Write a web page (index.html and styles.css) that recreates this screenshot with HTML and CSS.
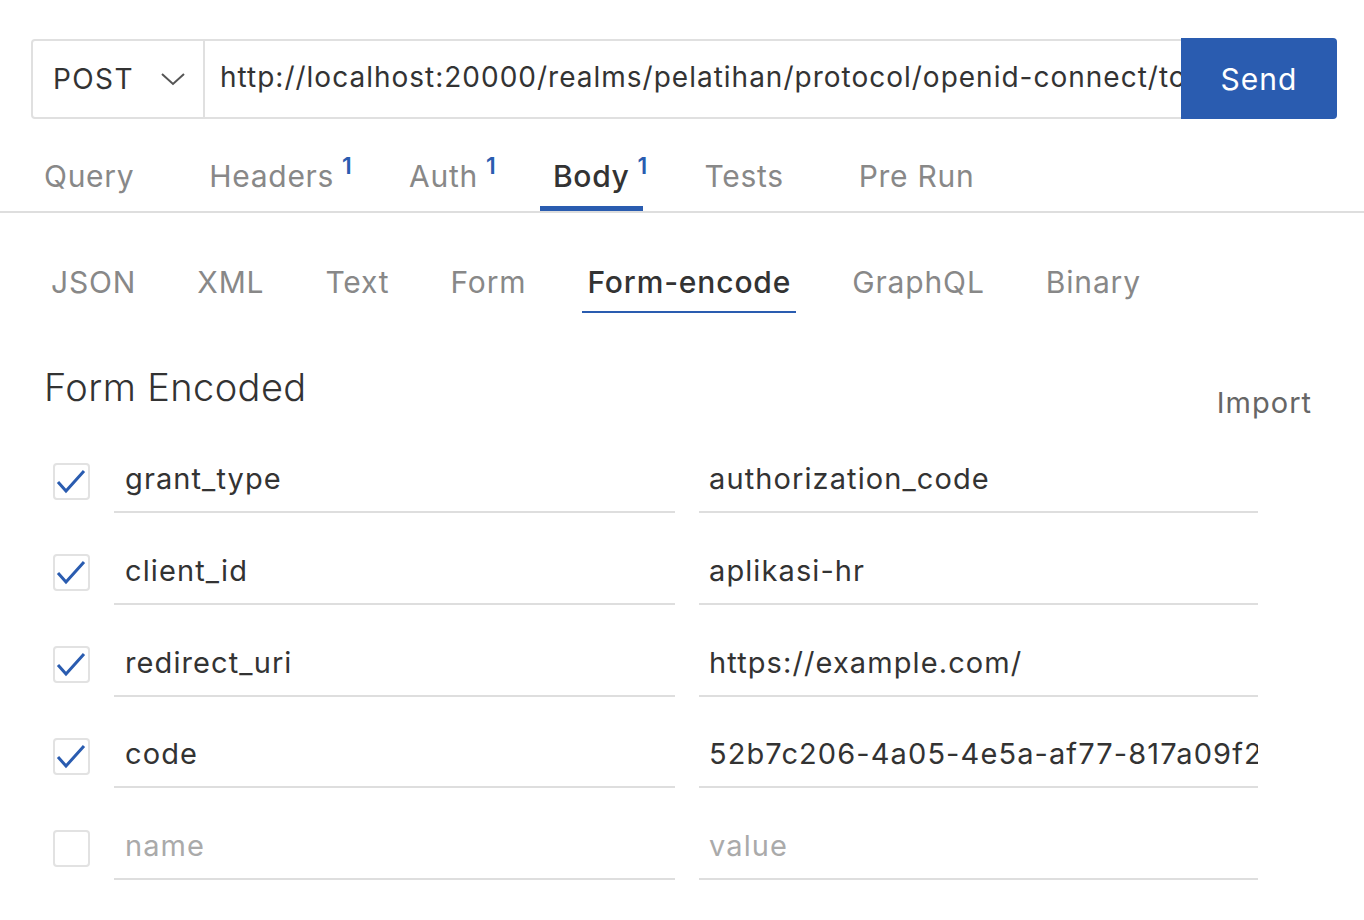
FILE: index.html
```html
<!DOCTYPE html>
<html>
<head>
<meta charset="utf-8">
<link rel="stylesheet" href="styles.css">
</head>
<body>
<div class="urlbar">
  <div class="method">
    <span>POST</span>
    <svg class="chev" width="26" height="14" viewBox="0 0 26 14"><path d="M2 2 L13 12 L24 2" fill="none" stroke="#555" stroke-width="2"/></svg>
  </div>
  <div class="url">http://localhost:20000/realms/pelatihan/protocol/openid-connect/token</div>
  <button class="send">Send</button>
</div>

<nav class="tabs">
  <div class="tab">Query</div>
  <div class="tab"><span class="lbl">Headers<span class="badge">1</span></span></div>
  <div class="tab"><span class="lbl">Auth<span class="badge">1</span></span></div>
  <div class="tab active"><span class="lbl">Body<span class="badge">1</span></span></div>
  <div class="tab">Tests</div>
  <div class="tab">Pre Run</div>
</nav>

<nav class="subtabs">
  <div class="subtab">JSON</div>
  <div class="subtab">XML</div>
  <div class="subtab">Text</div>
  <div class="subtab">Form</div>
  <div class="subtab active">Form-encode</div>
  <div class="subtab">GraphQL</div>
  <div class="subtab">Binary</div>
</nav>

<section class="panel">
  <div class="panel-head">
    <h2 class="title">Form Encoded</h2>
    <span class="import">Import</span>
  </div>
  <div class="rows">
    <div class="row">
      <span class="cb checked"><svg width="36" height="36" viewBox="0 0 36 36"><path d="M5 19 L13 28 L31 8" fill="none" stroke="#2a5cb0" stroke-width="3"/></svg></span>
      <div class="field">grant_type</div>
      <div class="field val">authorization_code</div>
    </div>
    <div class="row">
      <span class="cb checked"><svg width="36" height="36" viewBox="0 0 36 36"><path d="M5 19 L13 28 L31 8" fill="none" stroke="#2a5cb0" stroke-width="3"/></svg></span>
      <div class="field">client_id</div>
      <div class="field val">aplikasi-hr</div>
    </div>
    <div class="row">
      <span class="cb checked"><svg width="36" height="36" viewBox="0 0 36 36"><path d="M5 19 L13 28 L31 8" fill="none" stroke="#2a5cb0" stroke-width="3"/></svg></span>
      <div class="field">redirect_uri</div>
      <div class="field val">https://example.com/</div>
    </div>
    <div class="row">
      <span class="cb checked"><svg width="36" height="36" viewBox="0 0 36 36"><path d="M5 19 L13 28 L31 8" fill="none" stroke="#2a5cb0" stroke-width="3"/></svg></span>
      <div class="field">code</div>
      <div class="field val">52b7c206-4a05-4e5a-af77-817a09f2c1d3</div>
    </div>
    <div class="row">
      <span class="cb"></span>
      <div class="field ph">name</div>
      <div class="field val ph">value</div>
    </div>
  </div>
</section>
</body>
</html>
```

FILE: styles.css
```css
* { box-sizing: border-box; }
html, body { margin: 0; padding: 0; background: #fff; }
body {
  font-family: Inter, "Noto Sans", "Liberation Sans", sans-serif;
  color: #333;
  width: 1364px;
  overflow: hidden;
}

.urlbar {
  display: flex;
  margin: 38px 27px 0 31px;
  height: 81px;
}
.method {
  width: 174px;
  display: flex;
  align-items: center;
  justify-content: space-between;
  padding: 0 17px 0 20px;
  border: 2px solid #e0e0e0;
  border-radius: 4px 0 0 4px;
  font-size: 28px;
  letter-spacing: 1.4px;
  margin-top: 1px;
}
.chev { display: block; }
.url {
  flex: 1;
  min-width: 0;
  border-top: 2px solid #e0e0e0;
  border-bottom: 2px solid #e0e0e0;
  margin-top: 1px;
  padding: 0 0 0 15px;
  font-size: 28px;
  letter-spacing: 1px;
  line-height: 73px;
  white-space: nowrap;
  overflow: hidden;
}
.send {
  width: 156px;
  border: none;
  background: #2a5cb0;
  color: #fff;
  font-family: inherit;
  font-size: 30px;
  letter-spacing: 1px;
  border-radius: 0 4px 4px 0;
  padding: 0;
}

.tabs {
  display: flex;
  gap: 49px;
  padding-left: 31px;
  border-bottom: 2px solid #dedede;
}
.tab {
  padding: 39px 13px 12px;
  font-size: 30px;
  letter-spacing: 0.7px;
  line-height: 36px;
  color: #888;
  border-bottom: 5px solid transparent;
}
.tab.active {
  color: #333;
  font-weight: 500;
  border-bottom-color: #2a5cb0;
}
.lbl { position: relative; }
.badge {
  position: absolute;
  left: 100%;
  margin-left: 8px;
  top: -5px;
  font-size: 23px;
  line-height: 26px;
  font-weight: 600;
  letter-spacing: 0;
  color: #2a5cb0;
}

.subtabs {
  display: flex;
  gap: 51px;
  padding-left: 46px;
  margin-top: 51px;
}
.subtab {
  padding: 0 5px 11px;
  font-size: 30px;
  letter-spacing: 0.85px;
  line-height: 36px;
  color: #888;
  border-bottom: 2px solid transparent;
}
.subtab.active {
  color: #333;
  font-weight: 500;
  border-bottom-color: #2a5cb0;
}

.panel { padding: 0 0 0 44px; }
.panel-head {
  display: flex;
  justify-content: space-between;
  align-items: flex-start;
  margin-top: 51px;
  padding-right: 52px;
}
.title {
  margin: 0;
  font-size: 38px;
  line-height: 46px;
  font-weight: 300;
  letter-spacing: 0.4px;
  color: #333;
}
.import {
  margin-top: 22px;
  font-size: 29px;
  letter-spacing: 1px;
  line-height: 34px;
  color: #666;
}

.rows {
  display: flex;
  flex-direction: column;
  gap: 27.75px;
  margin-top: 29px;
  padding-left: 9px;
}
.row {
  display: flex;
  align-items: center;
}
.cb {
  width: 37px;
  height: 37px;
  border: 2px solid #e2e2e2;
  border-radius: 4px;
  margin-right: 24px;
  position: relative;
  flex: none;
}
.cb svg { position: absolute; left: -2px; top: -2px; }
.field {
  width: 561px;
  height: 64px;
  padding: 12px 11px 0;
  font-size: 29px;
  letter-spacing: 1.1px;
  line-height: 36px;
  border-bottom: 2px solid #dedede;
  white-space: nowrap;
  overflow: hidden;
  color: #333;
}
.field.val { width: 559px; margin-left: 24px; padding-left: 10px; padding-right: 0; }
.field.ph { color: #aaa; }
```
